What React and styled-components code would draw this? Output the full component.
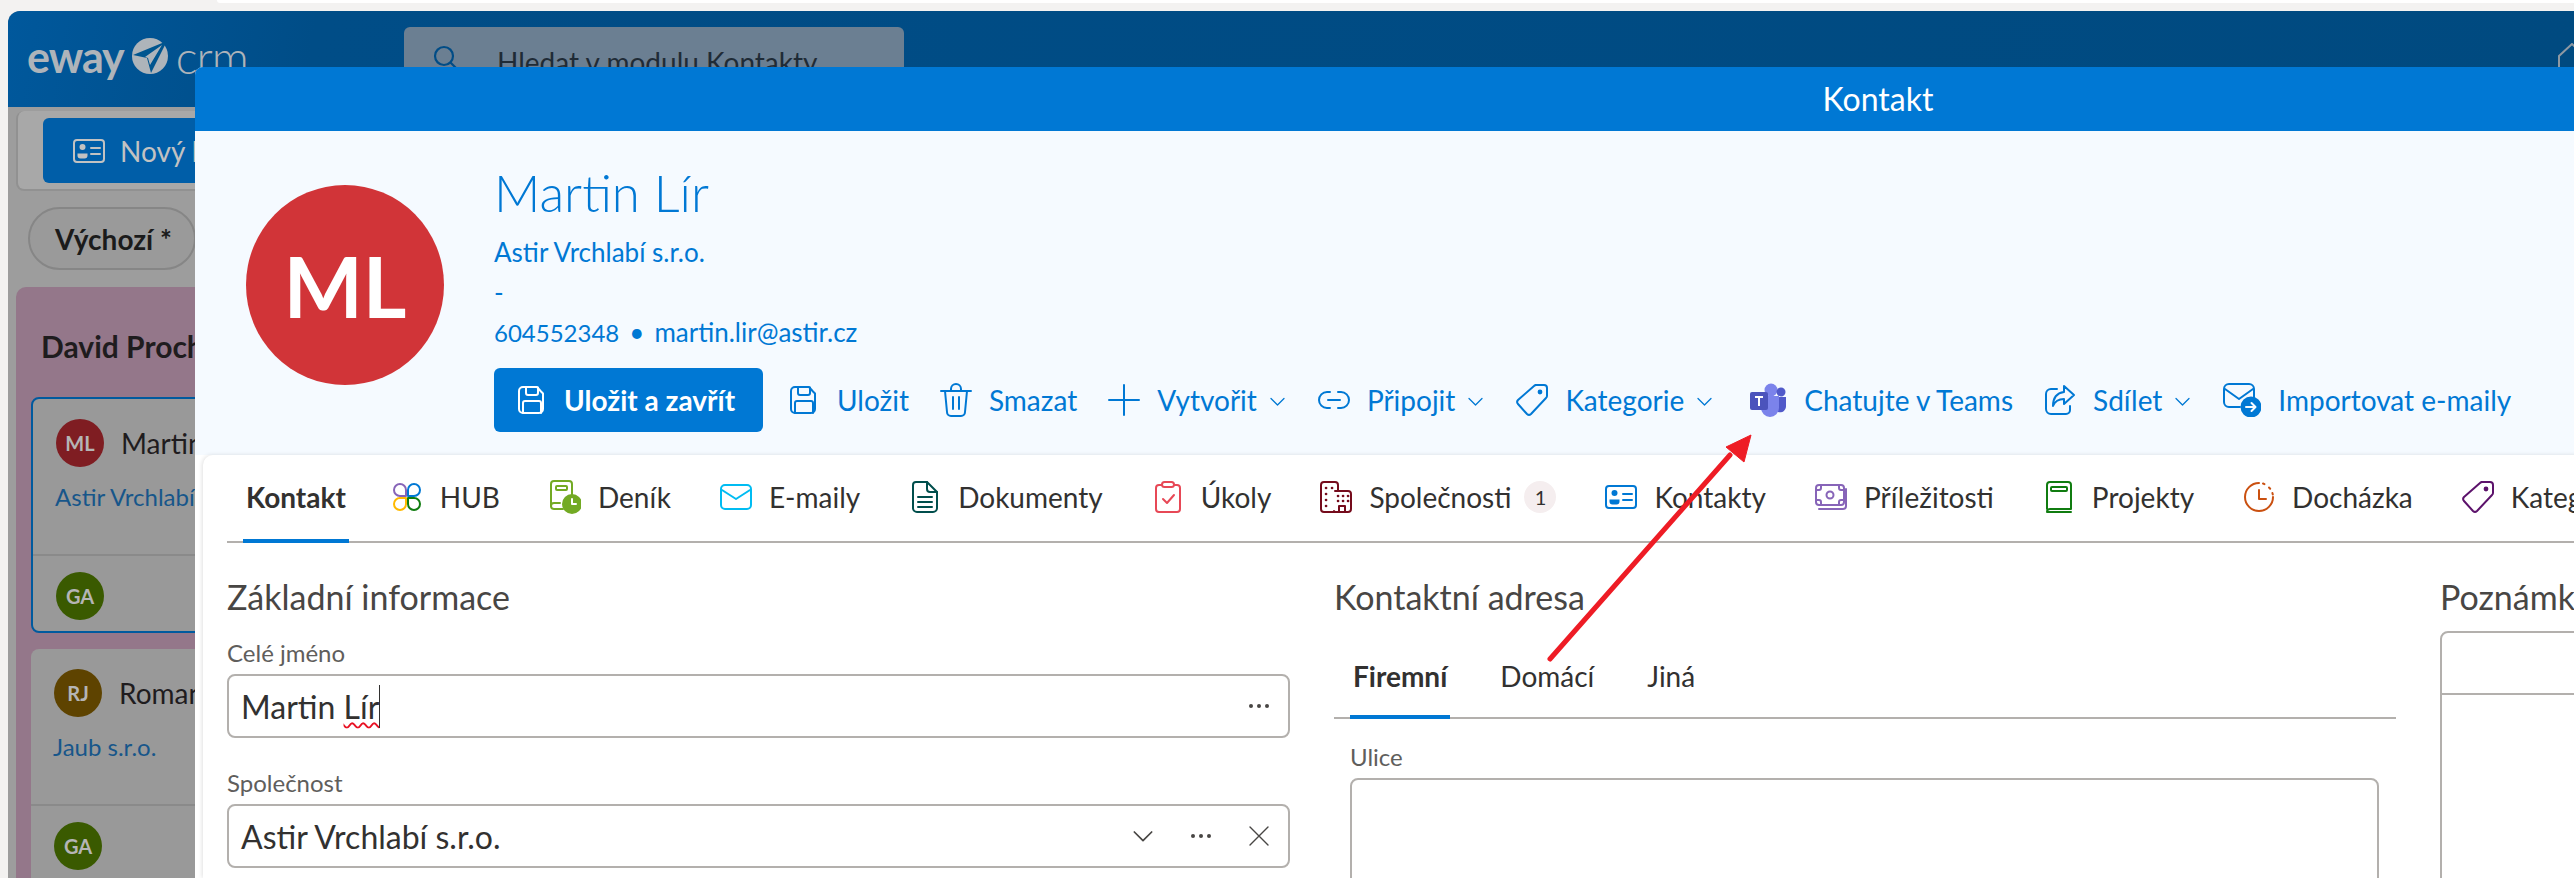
import styled, { createGlobalStyle } from 'styled-components'

const GlobalStyle = createGlobalStyle`
  html, body {
    margin: 0;
    padding: 0;
    background: #f3f2f1;
  }

  * {
    box-sizing: border-box;
  }
`

const BLUE = '#0078d4'

const Icon = ({ w = 32, h = 32, box, children, fill = 'none', stroke = BLUE, sw = 2 }) => (
  <svg
    width={w}
    height={h}
    viewBox={box || `0 0 ${w} ${h}`}
    fill={fill}
    stroke={stroke}
    strokeWidth={sw}
    strokeLinecap="round"
    strokeLinejoin="round"
    style={{ flex: 'none', display: 'block' }}
  >
    {children}
  </svg>
)

const SaveIcon = ({ color = BLUE }) => (
  <Icon stroke={color}>
    <path d="M7 3h14l4 4.5 2 2V25a4 4 0 0 1-4 4H7a4 4 0 0 1-4-4V7a4 4 0 0 1 4-4Z" />
    <path d="M10 3v6a2 2 0 0 0 2 2h8a2 2 0 0 0 2-2V3.5" />
    <path d="M7 29V19a2 2 0 0 1 2-2h14a2 2 0 0 1 2 2v10" />
  </Icon>
)

const TrashIcon = () => (
  <Icon w={32} h={34}>
    <path d="M1 8h30M11 8V6a5 5 0 0 1 10 0v2" />
    <path d="M5 8l2 21a4 4 0 0 0 4 4h10a4 4 0 0 0 4-4l2-21" />
    <path d="M13 14v12M19 14v12" />
  </Icon>
)

const PlusIcon = () => (
  <Icon>
    <path d="M16 1v30M1 16h30" />
  </Icon>
)

const LinkIcon = () => (
  <Icon>
    <path d="M12 8H9a8 8 0 0 0 0 16h3M20 8h3a8 8 0 0 1 0 16h-3M10 16h12" />
  </Icon>
)

const TagIcon = ({ color = BLUE }) => (
  <Icon stroke={color}>
    <path d="M21 1h7a3 3 0 0 1 3 3v8a3 3 0 0 1-1 2L15 30a3 3 0 0 1-4 0l-9-10a3 3 0 0 1 0-4L18 2a3 3 0 0 1 3-1Z" />
    <circle cx="24" cy="8" r="1.4" fill={color} />
  </Icon>
)

const ChevronIcon = ({ color = BLUE, size = 15 }) => (
  <Icon w={size} h={size} box="0 0 15 15" stroke={color} sw={1.3}>
    <path d="M1 4.5l6.5 6.5L14 4.5" />
  </Icon>
)

const TeamsIcon = () => (
  <Icon w={42} h={34} box="-4 0 42 34" stroke="none">
    <circle cx="22" cy="7" r="6.5" fill="#7b83eb" />
    <circle cx="32" cy="9" r="4.5" fill="#5059c9" />
    <path d="M27 14h10v9a6 6 0 0 1-8 6Z" fill="#5059c9" />
    <path d="M10 13h20v12a9 9 0 0 1-18 0Z" fill="#7b83eb" />
    <rect x="1" y="9" width="18" height="18" rx="2" fill="#4b53bc" />
    <path d="M6 13h8v2h-3v8H9v-8H6Z" fill="#fff" />
  </Icon>
)

const ShareIcon = () => (
  <Icon>
    <path d="M13 5H7a5 5 0 0 0-5 5v15a5 5 0 0 0 5 5h15a4 4 0 0 0 4-4v-4" />
    <path d="M20 2l10 9-10 9v-5c-6 0-9 2-11 7 0-8 4-13 11-14Z" />
  </Icon>
)

const MailArrowIcon = () => (
  <Icon w={38} h={34}>
    <path d="M17 24H6a5 5 0 0 1-5-5V6a5 5 0 0 1 5-5h20a5 5 0 0 1 5 5v9" />
    <path d="M2 6l14 10L30 6" />
    <circle cx="28" cy="24" r="9.5" fill={BLUE} />
    <path d="M23 24h9M28.5 20l4 4-4 4" stroke="#f5faff" />
  </Icon>
)

const HubIcon = () => (
  <Icon box="0 0 32 32">
    <path d="M9 3a6 6 0 0 1 6 6v6H9a6 6 0 0 1 0-12Z" stroke="#8764b8" />
    <path d="M23 3a6 6 0 0 1 0 12h-6V9a6 6 0 0 1 6-6Z" stroke="#0078d4" />
    <path d="M9 17h6v6a6 6 0 1 1-6-6Z" stroke="#ffb900" />
    <path d="M17 17h6a6 6 0 1 1-6 6Z" stroke="#107c10" />
  </Icon>
)

const DiaryIcon = () => (
  <Icon h={34} stroke="#73aa24">
    <path d="M14 29H5a3 3 0 0 1-3-3V4a3 3 0 0 1 3-3h15a3 3 0 0 1 3 3v12" />
    <path d="M2 26a3 3 0 0 1 3-3h6" />
    <rect x="7" y="6" width="11" height="4" rx="1" />
    <circle cx="23" cy="24" r="9" fill="#73aa24" />
    <path d="M23 19v5h4" stroke="#fff" />
  </Icon>
)

const MailIcon = () => (
  <Icon stroke="#00bcf2">
    <rect x="1" y="4" width="30" height="24" rx="4" />
    <path d="M2 9l14 9 14-9" />
  </Icon>
)

const DocIcon = () => (
  <Icon stroke="#004e4c">
    <path d="M7 1h11l10 10v16a4 4 0 0 1-4 4H8a4 4 0 0 1-4-4V4a3 3 0 0 1 3-3Z" />
    <path d="M18 1v7a3 3 0 0 0 3 3h7" />
    <path d="M9 16h14M9 21h14M9 26h14" />
  </Icon>
)

const TaskIcon = () => (
  <Icon stroke="#e74856">
    <path d="M10 4H7a3 3 0 0 0-3 3v21a3 3 0 0 0 3 3h18a3 3 0 0 0 3-3V7a3 3 0 0 0-3-3h-3" />
    <rect x="10" y="1" width="12" height="5" rx="2.5" />
    <path d="M11 18l4 4 7-8" />
  </Icon>
)

const CompanyIcon = () => (
  <Icon stroke="#750b1c">
    <path d="M16 31H4a3 3 0 0 1-3-3V4a3 3 0 0 1 3-3h11a3 3 0 0 1 3 3v6" />
    <path d="M15 10h13a3 3 0 0 1 3 3v15a3 3 0 0 1-3 3H15a3 3 0 0 1-1-1" />
    <path d="M19 31v-6h6v6" />
    <path
      d="M6 7h.1M12 7h.1M6 13h.1M6 19h.1M6 25h.1M18 15h.1M23 15h.1M28 15h.1M18 20h.1M23 20h.1M28 20h.1"
      strokeWidth="2.6"
    />
  </Icon>
)

const ContactIcon = ({ color = BLUE, sw = 2 }) => (
  <Icon h={24} stroke={color} sw={sw}>
    <rect x="1" y="1" width="30" height="22" rx="3" />
    <circle cx="9.5" cy="8" r="3" fill={color} stroke="none" />
    <path d="M4.5 14.5h10v2a3 3 0 0 1-3 3h-4a3 3 0 0 1-3-3Z" fill={color} stroke="none" />
    <path d="M18 9h9M18 15h9" />
  </Icon>
)

const MoneyIcon = () => (
  <Icon h={26} stroke="#8764b8">
    <rect x="1" y="1" width="28" height="20" rx="3" />
    <circle cx="15" cy="11" r="3.5" />
    <path d="M1 6h3a2 2 0 0 0 2-2V1M29 6h-3a2 2 0 0 1-2-2V1M1 16h3a2 2 0 0 1 2 2v3M29 16h-3a2 2 0 0 0-2 2v3" />
    <path d="M4 25h24a3 3 0 0 0 3-3V5" />
  </Icon>
)

const ProjectIcon = () => (
  <Icon stroke="#107c10">
    <path d="M4 28V4a3 3 0 0 1 3-3h18a3 3 0 0 1 3 3v24H7a3 3 0 0 0-3 3h24" />
    <rect x="8" y="6" width="16" height="4" rx="1" />
  </Icon>
)

const ClockIcon = () => (
  <Icon stroke="#ca5010">
    <path d="M16 2A14 14 0 1 0 30 16" />
    <path d="M20 2.5l1.5.7M26 6.5l1.2 1.3M29.4 12l.4 1.5" />
    <path d="M16 9v9h7" />
  </Icon>
)

const SearchIcon = () => (
  <Icon w={26} h={26} stroke="#004c86" sw={2.2}>
    <circle cx="11" cy="11" r="9" />
    <path d="M18 18l7 7" />
  </Icon>
)

const DotsIcon = ({ color = '#484644' }) => (
  <Icon w={20} h={4} stroke="none">
    <circle cx="2" cy="2" r="2" fill={color} />
    <circle cx="10" cy="2" r="2" fill={color} />
    <circle cx="18" cy="2" r="2" fill={color} />
  </Icon>
)

const CloseIcon = () => (
  <Icon w={20} h={20} stroke="#484644" sw={1.4}>
    <path d="M1 1l18 18M19 1L1 19" />
  </Icon>
)

const commands = [
  { label: 'Uložit', icon: <SaveIcon /> },
  { label: 'Smazat', icon: <TrashIcon /> },
  { label: 'Vytvořit', icon: <PlusIcon />, menu: true },
  { label: 'Připojit', icon: <LinkIcon />, menu: true },
  { label: 'Kategorie', icon: <TagIcon />, menu: true },
  { label: 'Chatujte v Teams', icon: <TeamsIcon /> },
  { label: 'Sdílet', icon: <ShareIcon />, menu: true },
  { label: 'Importovat e-maily', icon: <MailArrowIcon /> },
]

const tabs = [
  { label: 'HUB', icon: <HubIcon /> },
  { label: 'Deník', icon: <DiaryIcon /> },
  { label: 'E-maily', icon: <MailIcon /> },
  { label: 'Dokumenty', icon: <DocIcon /> },
  { label: 'Úkoly', icon: <TaskIcon /> },
  { label: 'Společnosti', icon: <CompanyIcon />, badge: 1 },
  { label: 'Kontakty', icon: <ContactIcon /> },
  { label: 'Příležitosti', icon: <MoneyIcon /> },
  { label: 'Projekty', icon: <ProjectIcon /> },
  { label: 'Docházka', icon: <ClockIcon /> },
  { label: 'Kategorie', icon: <TagIcon color="#5c126b" /> },
]

function App() {
  return (
    <Page>
      <GlobalStyle />
      <TopStrip>
        <BrowserTab />
      </TopStrip>

      <AppFrame>
        <AppHeader>
          <Logo>
            <LogoWord>eway</LogoWord>
            <svg width="38" height="36" viewBox="0 0 38 36" style={{ flex: 'none' }}>
              <circle cx="19" cy="18" r="18" fill="#aeb4ba" />
              <path d="M36 3L2 17l14 3 4 15Z" fill="#00558f" />
              <path d="M31 7L14 19l3 1 2 7Z" fill="#aeb4ba" />
            </svg>
            <LogoLight>crm</LogoLight>
          </Logo>
          <SearchBox>
            <SearchIcon />
            <span>Hledat v modulu Kontakty</span>
          </SearchBox>
          <HomeMark>
            <svg width="24" height="26" viewBox="0 0 24 26" fill="none" stroke="#8d98a2" strokeWidth="2">
              <path d="M1 26V13L14 1l10 9" />
            </svg>
          </HomeMark>
        </AppHeader>

        <BackToolbar>
          <NewButton>
            <ContactIcon color="#c2c2c2" />
            <span>Nový kontakt</span>
          </NewButton>
        </BackToolbar>

        <Chip>Výchozí *</Chip>

        <Board>
          <BoardTitle>David Procházka</BoardTitle>
          <BackCard $active>
            <CardTop>
              <PersonRow>
                <SmallAvatar $color="#7f1d22">ML</SmallAvatar>
                <span>Martin Lír</span>
              </PersonRow>
              <CardLink>Astir Vrchlabí s.r.o.</CardLink>
            </CardTop>
            <CardBottom>
              <SmallAvatar $color="#3a5a00">GA</SmallAvatar>
            </CardBottom>
          </BackCard>
          <BackCard>
            <CardTop>
              <PersonRow>
                <SmallAvatar $color="#5e4300">RJ</SmallAvatar>
                <span>Roman Jirásek</span>
              </PersonRow>
              <CardLink>Jaub s.r.o.</CardLink>
            </CardTop>
            <CardBottom>
              <SmallAvatar $color="#3a5a00">GA</SmallAvatar>
            </CardBottom>
          </BackCard>
        </Board>
      </AppFrame>

      <Modal>
        <ModalTitle>Kontakt</ModalTitle>
        <InfoPanel>
          <BigAvatar>ML</BigAvatar>
          <Details>
            <Name>Martin Lír</Name>
            <InfoLine>Astir Vrchlabí s.r.o.</InfoLine>
            <InfoLine>-</InfoLine>
            <InfoLine>
              <Phone>604552348</Phone>
              <Bullet>•</Bullet>martin.lir@astir.cz
            </InfoLine>
            <CommandBar>
              <SaveClose>
                <SaveIcon color="#ffffff" />
                Uložit a zavřít
              </SaveClose>
              {commands.map((command) => (
                <Command key={command.label}>
                  {command.icon}
                  <span>{command.label}</span>
                  {command.menu && (
                    <MenuMark>
                      <ChevronIcon />
                    </MenuMark>
                  )}
                </Command>
              ))}
            </CommandBar>
          </Details>
        </InfoPanel>

        <ContentPanel>
          <TabBar>
            <Tab $active>Kontakt</Tab>
            {tabs.map((tab) => (
              <Tab key={tab.label}>
                {tab.icon}
                <span>{tab.label}</span>
                {tab.badge && <Badge>{tab.badge}</Badge>}
              </Tab>
            ))}
          </TabBar>

          <FormGrid>
            <Section>
              <SectionTitle>Základní informace</SectionTitle>
              <FieldLabel>Celé jméno</FieldLabel>
              <Field>
                <FieldValue>
                  Martin <Misspelled>Lír</Misspelled>
                  <Caret />
                </FieldValue>
                <FieldActions>
                  <DotsIcon />
                </FieldActions>
              </Field>
              <FieldLabel $spaced>Společnost</FieldLabel>
              <Field>
                <FieldValue>Astir Vrchlabí s.r.o.</FieldValue>
                <FieldActions>
                  <ChevronIcon color="#484644" size={20} />
                  <DotsIcon />
                  <CloseIcon />
                </FieldActions>
              </Field>
            </Section>

            <Section>
              <SectionTitle>Kontaktní adresa</SectionTitle>
              <SubTabBar>
                <SubTab $active>Firemní</SubTab>
                <SubTab>Domácí</SubTab>
                <SubTab>Jiná</SubTab>
              </SubTabBar>
              <AddressBody>
                <StreetLabel>Ulice</StreetLabel>
                <TextBox />
              </AddressBody>
            </Section>

            <Section>
              <SectionTitle>Poznámka</SectionTitle>
              <NoteBox>
                <NoteToolbar />
              </NoteBox>
            </Section>
          </FormGrid>
        </ContentPanel>
      </Modal>

      <Arrow width="220" height="240" viewBox="0 0 220 240">
        <path d="M10 234L190 30" stroke="#ee1c25" strokeWidth="5" strokeLinecap="round" />
        <path d="M211 10L186 22L204 37Z" fill="#ee1c25" stroke="#ee1c25" strokeWidth="1" />
      </Arrow>
    </Page>
  )
}

const Page = styled.div`
  position: relative;
  width: 2574px;
  height: 878px;
  overflow: hidden;
  background: #f3f2f1;
  font-family: 'Lato', 'Open Sans', sans-serif;
  color: #323130;
`

const TopStrip = styled.div`
  height: 11px;
  padding-left: 217px;
`

const BrowserTab = styled.div`
  height: 3px;
  background: #ffffff;
  border-bottom-left-radius: 4px;
`

const AppFrame = styled.div`
  margin-left: 8px;
  height: 867px;
  overflow: hidden;
  background: #9d9d9d;
  border-top-left-radius: 12px;
`

const AppHeader = styled.header`
  display: flex;
  height: 96px;
  padding: 16px 0 0 19px;
  background: linear-gradient(100deg, #00589c 0%, #004d87 12%, #004a80 100%);
`

const Logo = styled.div`
  display: flex;
  align-items: center;
  gap: 7px;
  height: 50px;
  margin-top: 4px;
  width: 377px;
  flex: none;
  color: #aeb4ba;
`

const LogoWord = styled.span`
  font-size: 43px;
  font-weight: 700;
  letter-spacing: -1px;
`

const LogoLight = styled.span`
  font-size: 46px;
  font-weight: 300;
  letter-spacing: -1px;
`

const SearchBox = styled.div`
  display: flex;
  align-items: flex-start;
  gap: 38px;
  width: 500px;
  height: 64px;
  padding: 18px 0 0 29px;
  background: #6b7f92;
  border-radius: 6px;
  color: #1f2b36;
  font-size: 28px;
  line-height: 34px;
`

const HomeMark = styled.div`
  margin-left: auto;
  margin-right: -8px;
  padding-top: 16px;
`

const BackToolbar = styled.div`
  width: 300px;
  height: 80px;
  margin: 4px 0 0 8px;
  padding: 7px 0 0 26px;
  background: #a8a8a8;
  border: 2px solid #919191;
  border-top: none;
  border-radius: 8px;
`

const NewButton = styled.div`
  display: flex;
  align-items: center;
  gap: 15px;
  height: 65px;
  margin-left: -1px;
  padding-left: 30px;
  background: #005ea8;
  border-radius: 6px;
  color: #c2c2c2;
  font-size: 28px;
  white-space: nowrap;
`

const Chip = styled.div`
  display: flex;
  align-items: center;
  width: 168px;
  height: 63px;
  margin: 16px 0 0 20px;
  padding-left: 25px;
  background: #9a9a9a;
  border: 2px solid #868686;
  border-radius: 32px;
  color: #1b1b1b;
  font-size: 28px;
  font-weight: 700;
`

const Board = styled.section`
  width: 300px;
  height: 620px;
  margin: 17px 0 0 8px;
  padding: 0 15px;
  background: #94778a;
  border-radius: 10px 10px 0 0;
`

const BoardTitle = styled.h3`
  margin: 0;
  padding: 40px 0 0 10px;
  height: 110px;
  color: #1f1c1e;
  font-size: 30px;
  line-height: 38px;
  font-weight: 700;
  white-space: nowrap;
`

const BackCard = styled.article`
  margin-bottom: 16px;
  height: 236px;
  overflow: hidden;
  background: #999999;
  border: ${({ $active }) => ($active ? '2px solid #005a9e' : 'none')};
  border-radius: 8px;
`

const CardTop = styled.div`
  height: 155px;
  padding: 20px 0 0 23px;
`

const CardBottom = styled.div`
  padding: 16px 0 0 23px;
  border-top: 2px solid #8a8a8a;
`

const PersonRow = styled.div`
  display: flex;
  align-items: center;
  gap: 17px;
  font-size: 28px;
  color: #1f1c1e;
  white-space: nowrap;
`

const CardLink = styled.div`
  margin-top: 15px;
  margin-left: -1px;
  color: #17568a;
  font-size: 24px;
  white-space: nowrap;
`

const SmallAvatar = styled.span`
  display: flex;
  align-items: center;
  justify-content: center;
  flex: none;
  width: 48px;
  height: 48px;
  background: ${({ $color }) => $color};
  border-radius: 50%;
  color: #b5b5b5;
  font-size: 20px;
  font-weight: 700;
`

const Modal = styled.div`
  position: absolute;
  top: 67px;
  left: 195px;
  width: 3366px;
  height: 811px;
  overflow: hidden;
  background: #ffffff;
  border-top-left-radius: 8px;
`

const ModalTitle = styled.div`
  height: 64px;
  background: ${BLUE};
  color: #ffffff;
  font-size: 32px;
  font-weight: 400;
  line-height: 64px;
  text-align: center;
`

const InfoPanel = styled.div`
  display: flex;
  height: 324px;
  padding-left: 51px;
  background: #f5faff;
`

const BigAvatar = styled.div`
  display: flex;
  align-items: center;
  justify-content: center;
  flex: none;
  width: 198px;
  height: 200px;
  margin-top: 54px;
  background: #d13438;
  border-radius: 50%;
  color: #ffffff;
  font-size: 84px;
  font-weight: 700;
`

const Details = styled.div`
  margin-left: 50px;
  padding-top: 26px;
  color: ${BLUE};
`

const Name = styled.h1`
  margin: 0 0 3px;
  font-size: 51px;
  font-weight: 300;
  line-height: 72px;
`

const InfoLine = styled.div`
  font-size: 26px;
  line-height: 40px;
`

const Phone = styled.span`
  font-size: 24px;
`

const Bullet = styled.span`
  margin: 0 10px;
`

const CommandBar = styled.div`
  display: flex;
  align-items: center;
  height: 64px;
  margin-top: 15px;
`

const SaveClose = styled.div`
  display: flex;
  align-items: center;
  gap: 16px;
  flex: none;
  width: 269px;
  height: 64px;
  margin-right: 25px;
  padding-left: 22px;
  background: ${BLUE};
  border-radius: 6px;
  color: #ffffff;
  font-size: 28px;
  font-weight: 700;
  white-space: nowrap;
`

const Command = styled.div`
  display: flex;
  align-items: center;
  gap: 17px;
  margin-right: 31px;
  font-size: 28px;
  white-space: nowrap;
`

const MenuMark = styled.span`
  margin: 2px 2px 0 -4px;
`

const ContentPanel = styled.div`
  height: 423px;
  margin-left: 8px;
  margin-top: 0;
  padding: 0 24px;
  background: #ffffff;
  border-top-left-radius: 10px;
  box-shadow: -1px 0 4px rgba(0, 0, 0, 0.12);
`

const TabBar = styled.nav`
  display: flex;
  align-items: stretch;
  gap: 49px;
  height: 88px;
  padding-left: 16px;
  border-bottom: 2px solid #b3b0ad;
`

const Tab = styled.div`
  display: flex;
  align-items: center;
  gap: 17px;
  height: 88px;
  margin-right: ${({ $active }) => ($active ? '-7px' : '0')};
  padding: 0 ${({ $active }) => ($active ? '3px' : '0')};
  border-bottom: 4px solid ${({ $active }) => ($active ? BLUE : 'transparent')};
  font-size: 28px;
  font-weight: ${({ $active }) => ($active ? 700 : 400)};
  white-space: nowrap;
`

const Badge = styled.span`
  display: flex;
  align-items: center;
  justify-content: center;
  width: 32px;
  height: 32px;
  margin-left: -4px;
  background: #f5eeef;
  border-radius: 50%;
  font-size: 20px;
`

const FormGrid = styled.div`
  display: grid;
  grid-template-columns: 1063px 1062px 1063px;
  column-gap: 44px;
  padding-top: 35px;
`

const Section = styled.section`
  min-width: 0;
`

const SectionTitle = styled.h2`
  margin: 0;
  color: #484644;
  font-size: 34px;
  font-weight: 400;
  line-height: 38px;
  padding-bottom: 2px;
`

const FieldLabel = styled.label`
  display: block;
  margin-top: ${({ $spaced }) => ($spaced ? '30px' : '20px')};
  margin-bottom: 6px;
  color: #605e5c;
  font-size: 24px;
  line-height: 30px;
`

const Field = styled.div`
  display: flex;
  align-items: center;
  justify-content: space-between;
  height: 64px;
  padding: 0 19px 0 12px;
  border: 2px solid #b3b0ad;
  border-radius: 8px;
`

const FieldValue = styled.div`
  display: flex;
  align-items: center;
  font-size: 32px;
  white-space: pre;
`

const Misspelled = styled.span`
  text-decoration: underline wavy #e81123 2px;
  text-underline-offset: 3px;
`

const Caret = styled.i`
  width: 1px;
  height: 43px;
  background: #323130;
`

const FieldActions = styled.div`
  display: flex;
  align-items: center;
  gap: 38px;
`

const SubTabBar = styled.div`
  display: flex;
  gap: 47px;
  height: 68px;
  margin-top: 33px;
  padding-left: 16px;
  border-bottom: 2px solid #b3b0ad;
`

const SubTab = styled.div`
  height: 68px;
  padding: 8px 3px 0;
  border-bottom: 4px solid ${({ $active }) => ($active ? BLUE : 'transparent')};
  font-size: 28px;
  font-weight: ${({ $active }) => ($active ? 700 : 400)};
  line-height: 34px;
`

const AddressBody = styled.div`
  padding: 23px 17px 0 16px;
`

const StreetLabel = styled.label`
  display: block;
  margin-bottom: 6px;
  color: #605e5c;
  font-size: 24px;
  line-height: 30px;
`

const TextBox = styled.div`
  height: 200px;
  border: 2px solid #b3b0ad;
  border-radius: 8px;
`

const NoteBox = styled.div`
  height: 300px;
  margin-top: 13px;
  border: 2px solid #b3b0ad;
  border-radius: 8px;
`

const NoteToolbar = styled.div`
  height: 62px;
  border-bottom: 2px solid #b3b0ad;
`

const Arrow = styled.svg`
  position: absolute;
  top: 425px;
  left: 1540px;
  pointer-events: none;
`

export default App
